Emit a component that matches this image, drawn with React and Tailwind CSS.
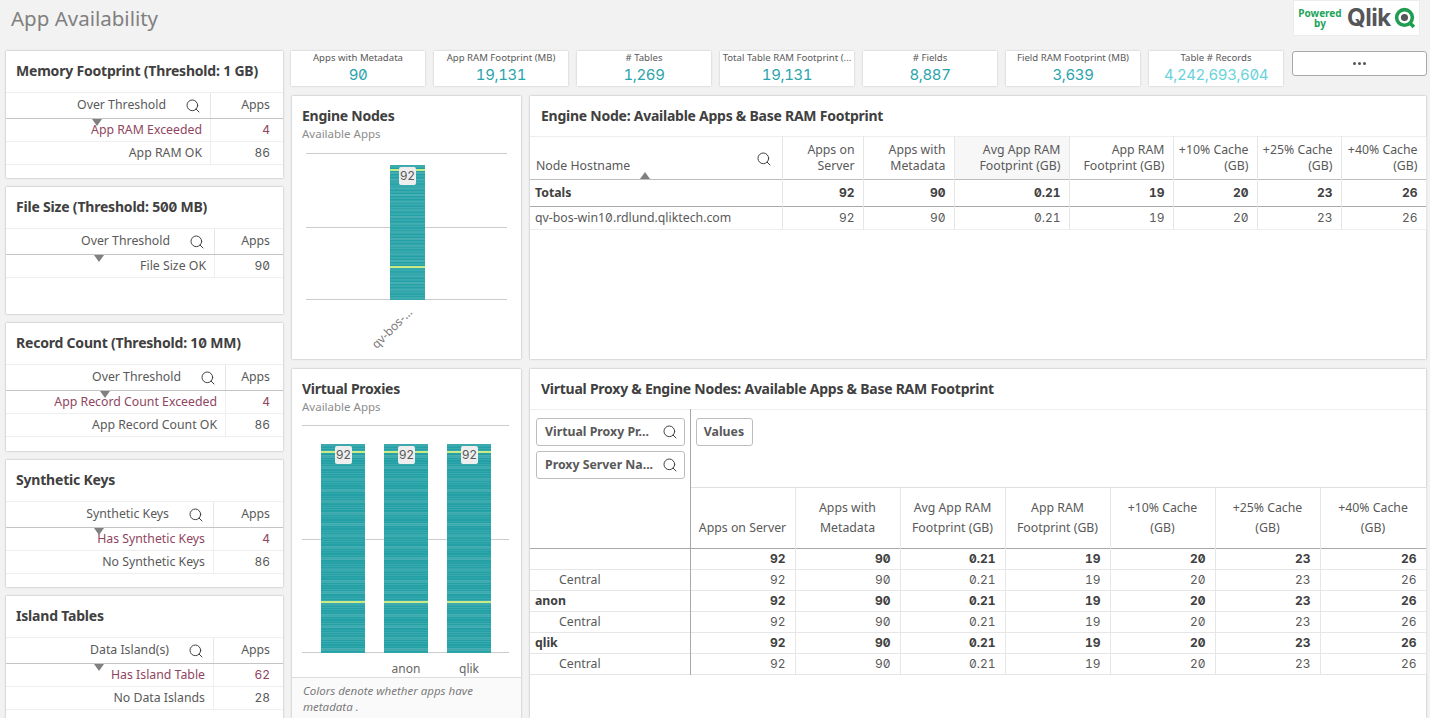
import { Search } from 'lucide-react';

const Num = ({ children, className = '' }) => (
  <span className={`font-['Inter',sans-serif] [font-feature-settings:'zero','tnum'] ${className}`}>{children}</span>
);

const filterCards = [
  {
    title: <>Memory Footprint (Threshold: 1 GB)</>,
    head: 'Over Threshold',
    cols: 'grid-cols-[205px_72px]',
    tri: 'left-[86px]',
    height: 'h-[127px]',
    rows: [
      { label: 'App RAM Exceeded', value: '4', alert: true },
      { label: 'App RAM OK', value: '86' },
    ],
  },
  {
    title: <>File Size (Threshold: 5<Num className="text-[13.5px]">00</Num> MB)</>,
    head: 'Over Threshold',
    cols: 'grid-cols-[209px_68px]',
    tri: 'left-[88px]',
    height: 'h-[127px]',
    rows: [{ label: 'File Size OK', value: '90' }],
  },
  {
    title: <>Record Count (Threshold: 1<Num className="text-[13.5px]">0</Num> MM)</>,
    head: 'Over Threshold',
    cols: 'grid-cols-[220px_57px]',
    tri: 'left-[94px]',
    height: 'h-[128px]',
    rows: [
      { label: 'App Record Count Exceeded', value: '4', alert: true },
      { label: 'App Record Count OK', value: '86' },
    ],
  },
  {
    title: 'Synthetic Keys',
    head: 'Synthetic Keys',
    cols: 'grid-cols-[208px_69px]',
    tri: 'left-[88px]',
    height: 'h-[127px]',
    rows: [
      { label: 'Has Synthetic Keys', value: '4', alert: true },
      { label: 'No Synthetic Keys', value: '86' },
    ],
  },
  {
    title: 'Island Tables',
    head: 'Data Island(s)',
    cols: 'grid-cols-[208px_69px]',
    tri: 'left-[88px]',
    height: 'h-[127px]',
    rows: [
      { label: 'Has Island Table', value: '62', alert: true },
      { label: 'No Data Islands', value: '28' },
    ],
  },
];

const kpis = [
  { label: 'Apps with Metadata', value: '90' },
  { label: 'App RAM Footprint (MB)', value: '19,131' },
  { label: '# Tables', value: '1,269' },
  { label: 'Total Table RAM Footprint (...', value: '19,131' },
  { label: '# Fields', value: '8,887' },
  { label: 'Field RAM Footprint (MB)', value: '3,639' },
  { label: 'Table # Records', value: '4,242,693,604', light: true },
];

const engineCols = ['Apps on Server', 'Apps with Metadata', 'Avg App RAM Footprint (GB)', 'App RAM Footprint (GB)', '+10% Cache (GB)', '+25% Cache (GB)', '+40% Cache (GB)'];
const engineWidths = ['w-[252px]', 'w-[81px]', 'w-[91px]', 'w-[115px]', 'w-[104px]', 'w-[84px]', 'w-[84px]', 'w-[85px]'];
const proxyWidths = ['w-[160px]', 'w-[105px]', 'w-[105px]', 'w-[105px]', 'w-[105px]', 'w-[105px]', 'w-[105px]', 'w-[106px]'];
const values = ['92', '90', '0.21', '19', '20', '23', '26'];
const proxyRows = [
  { label: '', bold: true },
  { label: 'Central' },
  { label: 'anon', bold: true },
  { label: 'Central' },
  { label: 'qlik', bold: true },
  { label: 'Central' },
];

function FilterCard({ card }) {
  return (
    <section className={`${card.height} shrink-0 bg-white shadow-[0_0_2px_rgba(0,0,0,0.3)] relative`}>
      <h2 className="h-[42px] pl-[10px] pb-[2px] flex items-center text-[14px] tracking-[-0.2px] font-bold text-[#404040] border-b border-[#eeeeee]">
        <span>{card.title}</span>
      </h2>
      <div className={`grid ${card.cols} h-[26px] text-[12.3px] border-b border-[#c4c4c4]`}>
        <div className="flex items-center justify-end pr-[9px] border-r border-[#e6e6e6]">
          <span>{card.head}</span>
          <Search size={16} strokeWidth={1.5} className="ml-[19px] text-[#404040]" />
        </div>
        <div className="flex items-center justify-end pr-[13px]">Apps</div>
      </div>
      {card.rows.map((r) => (
        <div key={r.label} className={`grid ${card.cols} h-[23px] text-[12.3px] border-b border-[#eeeeee] ${r.alert ? 'text-[#8f4560]' : ''}`}>
          <div className="flex items-center justify-end pr-[8px] border-r border-[#eeeeee]">{r.label}</div>
          <div className="flex items-center justify-end pr-[13px]"><Num className="text-[12px]">{r.value}</Num></div>
        </div>
      ))}
      <div className={`absolute top-[68px] ${card.tri} w-0 h-0 border-x-[5px] border-x-transparent border-t-[7px] border-t-[#808080]`} />
    </section>
  );
}

function Stack({ x, y, width, height, yellow }) {
  const seg = height / 92;
  const parts = [];
  for (let i = 0; i < 92; i++) {
    // pseudo random order of app shades
    const shade = (i * 37) % 5;
    parts.push(
      <rect key={i} x={x} y={y + i * seg} width={width} height={seg - 0.2} fill={shade === 0 ? '#3ba9ad' : '#22a0a5'} />
    );
  }
  return (
    <g>
      <rect x={x} y={y} width={width} height={height} fill="#6fc0c3" />
      {parts}
      {yellow.map((ly) => (
        <rect key={ly} x={x} y={ly} width={width} height="2" fill="#c9ea84" />
      ))}
    </g>
  );
}

function ValueBadge({ x, y }) {
  return (
    <g>
      <rect x={x} y={y} width="17" height="18" rx="2" fill="#eeeeee" />
      <text x={x + 8.5} y={y + 13} textAnchor="middle" fontSize="12" fill="#595959" fontFamily="Inter, sans-serif">92</text>
    </g>
  );
}

function EngineChart() {
  return (
    <svg width="228" height="206" viewBox="292 153 228 206" className="block">
      {[153, 227, 299].map((y) => (
        <line key={y} x1="306" x2="507" y1={y + 0.5} y2={y + 0.5} stroke="#cccccc" />
      ))}
      <Stack x={390} y={165} width={35} height={135} yellow={[169, 266]} />
      <ValueBadge x={399} y={167} />
      <text x="413" y="313" textAnchor="end" transform="rotate(-45 413 313)" fontSize="12" fill="#7a7a7a" fontFamily="Noto Sans, sans-serif">qv-bos-...</text>
    </svg>
  );
}

function ProxyChart() {
  return (
    <svg width="228" height="252" viewBox="292 425 228 252" className="block">
      {[425, 539, 652].map((y) => (
        <line key={y} x1="302" x2="509" y1={y + 0.5} y2={y + 0.5} stroke="#cccccc" />
      ))}
      {[321, 384, 447].map((x) => (
        <g key={x}>
          <Stack x={x} y={444} width={44} height={209} yellow={[451, 601]} />
          <ValueBadge x={x + 14} y={446} />
        </g>
      ))}
      <text x="406" y="673" textAnchor="middle" fontSize="12" fill="#666666" fontFamily="Noto Sans, sans-serif">anon</text>
      <text x="469" y="673" textAnchor="middle" fontSize="12" fill="#666666" fontFamily="Noto Sans, sans-serif">qlik</text>
    </svg>
  );
}

function PillField({ label }) {
  return (
    <div className="h-[28px] w-[149px] border border-[#bdbdbd] rounded-[3px] flex items-center justify-between pl-[8px] pr-[6px] font-bold text-[12.3px]">
      <span className="pt-px">{label}</span>
      <Search size={16} strokeWidth={1.5} className="text-[#404040]" />
    </div>
  );
}

export default function App() {
  return (
    <div className="w-[1430px] h-[718px] overflow-hidden bg-[#f2f2f2] font-['Noto_Sans',sans-serif] text-[#595959]">
      {/* Sheet title */}
      <header className="h-[51px] flex items-start justify-between pl-[11px] pr-[10px]">
        <h1 className="text-[20.5px] leading-[36px] text-[#808080]">App Availability</h1>
        <div className="w-[127px] h-[36px] bg-white border border-[#ececec] flex items-center pl-[4px] gap-[5px]">
          <div className="text-[10px] leading-[12px] font-bold text-[#22a35a] text-center w-[44px]">
            <div>Powered</div>
            <div className="-mt-[2px]">by</div>
          </div>
          <span className="font-['Inter',sans-serif] text-[24px] font-bold leading-none text-[#54565a] tracking-[-0.5px]">Qlik</span>
          <svg width="22" height="22" viewBox="0 0 21 21" className="-ml-[2px]">
            <circle cx="10" cy="10" r="7.5" fill="none" stroke="#1f9e52" strokeWidth="3.4" />
            <circle cx="10" cy="10" r="3.4" fill="#54565a" />
            <path d="M14.5 14.5 L19 19" stroke="#1f9e52" strokeWidth="3.4" />
          </svg>
        </div>
      </header>

      <div className="flex pl-[6px]">
        {/* Threshold filter cards */}
        <aside className="w-[277px] shrink-0 flex flex-col gap-[9px] h-[667px]">
          {filterCards.map((c) => (
            <FilterCard key={c.rows[0].label} card={c} />
          ))}
        </aside>

        <main className="ml-[8px] w-[1136px] flex flex-col">
          {/* KPI row */}
          <div className="flex gap-[9px] h-[45px] items-start">
            {kpis.map((k) => (
              <div key={k.label} className="w-[134px] h-[35px] bg-white shadow-[0_0_2px_rgba(0,0,0,0.2)] flex flex-col items-center overflow-hidden">
                <div className="text-[9.6px] leading-[14px] whitespace-nowrap">{k.label}</div>
                <Num className={`text-[15px] leading-[19px] tracking-[-0.4px] ${k.light ? 'text-[#6ad2da]' : 'text-[#2ba4ab]'}`}>{k.value}</Num>
              </div>
            ))}
            <button className="w-[135px] h-[25px] bg-white border border-[#a8a8a8] rounded-[3px] flex items-center justify-center gap-[2px]">
              <span className="w-[3px] h-[3px] rounded-full bg-[#555555]" />
              <span className="w-[3px] h-[3px] rounded-full bg-[#555555]" />
              <span className="w-[3px] h-[3px] rounded-full bg-[#555555]" />
            </button>
          </div>

          {/* Engine node row */}
          <div className="flex gap-[9px] pl-[1px] h-[264px]">
            <section className="w-[229px] h-[263px] bg-white shadow-[0_0_2px_rgba(0,0,0,0.3)]">
              <div className="h-[57px] pl-[10px] pt-[10px]">
                <h2 className="text-[14px] tracking-[-0.25px] leading-[19px] font-bold text-[#404040]">Engine Nodes</h2>
                <p className="text-[11.5px] leading-[17px] text-[#8c8c8c]">Available Apps</p>
              </div>
              <EngineChart />
            </section>
            <section className="w-[896px] h-[263px] bg-white shadow-[0_0_2px_rgba(0,0,0,0.3)]">
              <h2 className="h-[40px] pl-[11px] pb-[2px] flex items-center text-[14px] tracking-[-0.25px] font-bold text-[#404040]">Engine Node: Available Apps &amp; Base RAM Footprint</h2>
              <table className="table-fixed w-[896px] text-[12.3px]">
                <colgroup>
                  {engineWidths.map((w, i) => (
                    <col key={i} className={w} />
                  ))}
                </colgroup>
                <thead>
                  <tr className="h-[43px] border-y border-t-[#eeeeee] border-b-[#bdbdbd]">
                    <th className="relative font-normal text-left align-bottom pl-[6px] pb-[4px] border-r border-[#e6e6e6]">
                      Node Hostname
                      <Search size={16} strokeWidth={1.5} className="absolute right-[10px] top-[14px] text-[#404040]" />
                      <span className="absolute left-[110px] bottom-0 w-0 h-0 border-x-[5px] border-x-transparent border-b-[7px] border-b-[#808080]" />
                    </th>
                    {engineCols.map((c, i) => (
                      <th key={c} className={`font-normal text-right leading-[16px] pr-[8px] border-r border-[#e6e6e6] ${i === 2 ? 'bg-[#f7f7f7]' : ''}`}>{c}</th>
                    ))}
                  </tr>
                </thead>
                <tbody>
                  <tr className="h-[27px] border-b border-[#a8a8a8] font-bold text-[#404040]">
                    <td className="pl-[5px] border-r border-[#e6e6e6]">Totals</td>
                    {values.map((v) => (
                      <td key={v} className="text-right pr-[8px] border-r border-[#e6e6e6]"><Num className="text-[12px]">{v}</Num></td>
                    ))}
                  </tr>
                  <tr className="h-[23px] border-b border-[#eeeeee]">
                    <td className="pl-[5px] border-r border-[#e6e6e6]">qv-bos-win1<Num className="text-[12px]">0</Num>.rdlund.qliktech.com</td>
                    {values.map((v) => (
                      <td key={v} className="text-right pr-[8px] border-r border-[#e6e6e6]"><Num className="text-[12px]">{v}</Num></td>
                    ))}
                  </tr>
                </tbody>
              </table>
            </section>
          </div>

          <div className="h-[9px] shrink-0" />

          {/* Virtual proxy row */}
          <div className="flex gap-[9px] pl-[1px] h-[349px]">
            <section className="w-[229px] h-[349px] bg-white shadow-[0_0_2px_rgba(0,0,0,0.3)] flex flex-col">
              <div className="h-[56px] pl-[10px] pt-[10px] shrink-0">
                <h2 className="text-[14px] tracking-[-0.25px] leading-[19px] font-bold text-[#404040]">Virtual Proxies</h2>
                <p className="text-[11.5px] leading-[17px] text-[#8c8c8c]">Available Apps</p>
              </div>
              <ProxyChart />
              <p className="flex-1 bg-[#fafafa] border-t border-[#dddddd] pl-[11px] pr-[10px] pt-[5px] text-[11.5px] leading-[16px] italic text-[#7a7a7a]">Colors denote whether apps have metadata .</p>
            </section>
            <section className="w-[896px] h-[349px] bg-white shadow-[0_0_2px_rgba(0,0,0,0.3)]">
              <h2 className="h-[40px] pl-[11px] pb-[2px] flex items-center text-[14px] tracking-[-0.25px] font-bold text-[#404040]">Virtual Proxy &amp; Engine Nodes: Available Apps &amp; Base RAM Footprint</h2>
              <table className="table-fixed w-[896px] text-[12.3px]">
                <colgroup>
                  {proxyWidths.map((w, i) => (
                    <col key={i} className={w} />
                  ))}
                </colgroup>
                <thead>
                  <tr className="h-[78px] border-t border-[#eeeeee]">
                    <td rowSpan={2} className="align-top border-r border-b border-r-[#a8a8a8] border-b-[#a8a8a8] pl-[6px] pt-[8px]">
                      <div className="flex flex-col gap-[5px]">
                        <PillField label="Virtual Proxy Pr..." />
                        <PillField label="Proxy Server Na..." />
                      </div>
                    </td>
                    <td colSpan={7} className="align-top pl-[5px] pt-[8px] border-b border-[#e0e0e0]">
                      <div className="h-[28px] w-[57px] pt-px border border-[#bdbdbd] rounded-[3px] flex items-center justify-center font-bold">Values</div>
                    </td>
                  </tr>
                  <tr className="h-[61px] border-b border-[#a8a8a8]">
                    {engineCols.map((c) => (
                      <th key={c} className="font-normal text-center align-bottom leading-[20px] px-[4px] pb-[10px] border-r border-[#e6e6e6]">{c}</th>
                    ))}
                  </tr>
                </thead>
                <tbody>
                  {proxyRows.map((r, i) => (
                    <tr key={i} className={`h-[21px] border-b border-[#e6e6e6] ${r.bold ? 'font-bold text-[#404040]' : ''}`}>
                      <td className={`border-r border-r-[#a8a8a8] ${r.bold ? 'pl-[5px]' : 'pl-[29px]'}`}>{r.label}</td>
                      {values.map((v) => (
                        <td key={v} className="text-right pr-[9px] border-r border-[#e6e6e6]"><Num className="text-[12px]">{v}</Num></td>
                      ))}
                    </tr>
                  ))}
                </tbody>
              </table>
            </section>
          </div>
        </main>
      </div>
    </div>
  );
}
